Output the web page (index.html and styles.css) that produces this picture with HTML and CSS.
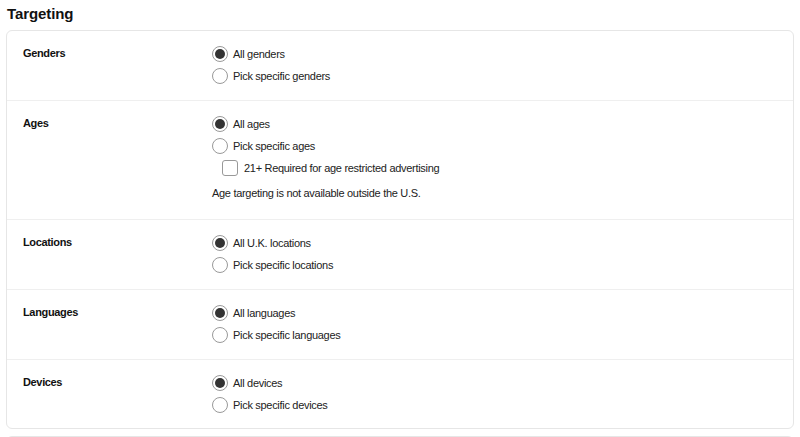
FILE: index.html
```html
<!DOCTYPE html>
<html>
<head>
<meta charset="utf-8">
<link rel="stylesheet" href="styles.css">
</head>
<body>
<h1 class="title">Targeting</h1>
<div class="card">
  <div class="row">
    <div class="label">Genders</div>
    <div class="options">
      <div class="opt"><span class="radio checked"></span>All genders</div>
      <div class="opt"><span class="radio"></span>Pick specific genders</div>
    </div>
  </div>
  <div class="row">
    <div class="label">Ages</div>
    <div class="options">
      <div class="opt"><span class="radio checked"></span>All ages</div>
      <div class="opt"><span class="radio"></span>Pick specific ages</div>
      <div class="opt sub"><span class="check"></span>21+ Required for age restricted advertising</div>
      <div class="note">Age targeting is not available outside the U.S.</div>
    </div>
  </div>
  <div class="row">
    <div class="label">Locations</div>
    <div class="options">
      <div class="opt"><span class="radio checked"></span>All U.K. locations</div>
      <div class="opt"><span class="radio"></span>Pick specific locations</div>
    </div>
  </div>
  <div class="row">
    <div class="label">Languages</div>
    <div class="options">
      <div class="opt"><span class="radio checked"></span>All languages</div>
      <div class="opt"><span class="radio"></span>Pick specific languages</div>
    </div>
  </div>
  <div class="row">
    <div class="label">Devices</div>
    <div class="options">
      <div class="opt"><span class="radio checked"></span>All devices</div>
      <div class="opt"><span class="radio"></span>Pick specific devices</div>
    </div>
  </div>
</div>
<div class="card next"></div>
</body>
</html>
```
FILE: styles.css
```css
html, body {
  margin: 0;
  padding: 0;
  background: #ffffff;
}
body {
  padding: 0 6px;
  font-family: "Liberation Sans", Arial, sans-serif;
  color: #222;
  font-size: 11px;
  letter-spacing: -0.3px;
  overflow: hidden;
  height: 437px;
  box-sizing: border-box;
}
.title {
  margin: 0;
  padding: 4px 0 0 1px;
  height: 26px;
  font-size: 15px;
  line-height: 20px;
  font-weight: bold;
  color: #111;
  letter-spacing: -0.1px;
}
.card {
  border: 1px solid #e6e6e6;
  border-radius: 6px;
  background: #fff;
}
.card.next {
  margin-top: 7px;
  height: 10px;
}
.row {
  display: flex;
  padding: 12px 0 13px 16px;
  border-top: 1px solid #efefef;
}
.row:first-child {
  border-top: none;
}
.row:last-child {
  padding-bottom: 12px;
}
.label {
  width: 189px;
  flex: none;
  font-weight: bold;
  line-height: 20px;
  color: #111;
  letter-spacing: -0.35px;
}
.options {
  display: flex;
  flex-direction: column;
}
.opt {
  display: flex;
  align-items: center;
  height: 22px;
  gap: 5px;
  color: #222;
}
.opt.sub {
  padding-left: 10px;
  gap: 6px;
}
.radio {
  width: 14px;
  height: 14px;
  border: 1px solid #999;
  border-radius: 50%;
  box-sizing: content-box;
  position: relative;
  flex: none;
}
.radio.checked::after {
  content: "";
  position: absolute;
  left: 2px;
  top: 2px;
  width: 10px;
  height: 10px;
  border-radius: 50%;
  background: #333;
}
.check {
  width: 14px;
  height: 14px;
  border: 1px solid #999;
  border-radius: 3px;
  flex: none;
}
.note {
  margin: 3px 0 2px;
  line-height: 22px;
  color: #222;
}
```
